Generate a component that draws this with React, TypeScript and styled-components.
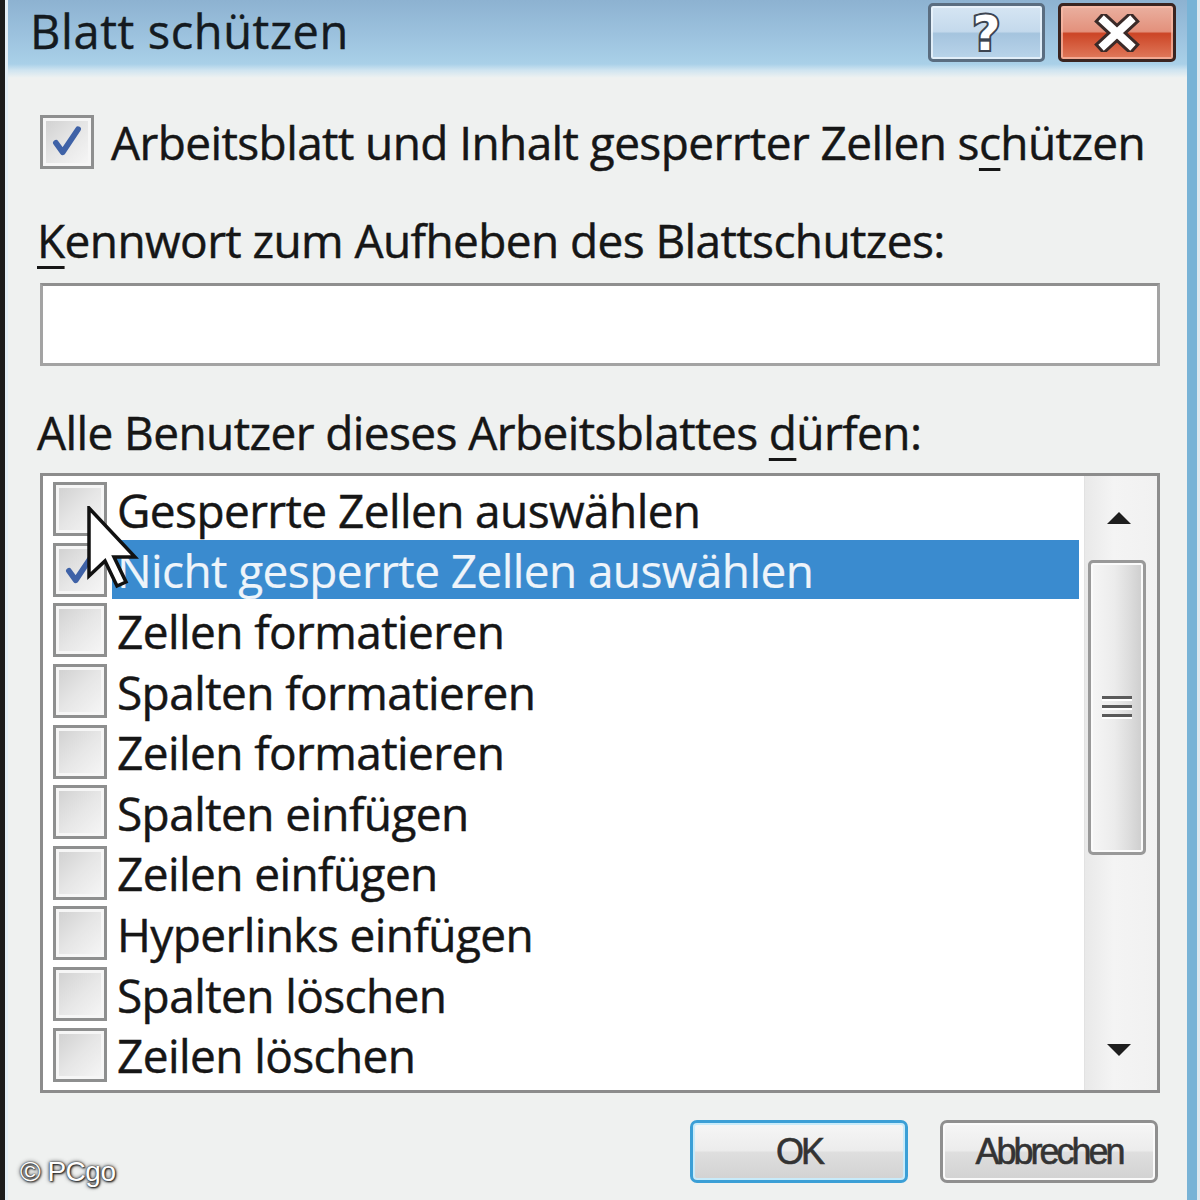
import React from "react";
import styled, { createGlobalStyle } from "styled-components";

const GlobalStyle = createGlobalStyle`
  html, body { margin: 0; padding: 0; background: #eff1f0; }
  body {
    width: 1200px; height: 1200px; overflow: hidden;
    font-family: "Open Sans", "Noto Sans", sans-serif;
    color: #161616;
  }
`;

const Window = styled.div`
  position: relative;
  width: 1200px;
  height: 1200px;
  box-sizing: border-box;
  border-left: 5px solid #1c1c1c;
  border-right: 3px solid #dfe9ef;
  background: #eff1f0;
  overflow: hidden;
`;

const Frame = styled.div`
  height: 100%;
  box-sizing: border-box;
  display: flex;
  flex-direction: column;
  border-left: 3px solid #e3eef6;
  border-right: 10px solid #78b3d6;
`;

const TitleBar = styled.div`
  height: 78px;
  flex: none;
  display: flex;
  align-items: flex-start;
  padding-left: 22px;
  padding-right: 11px;
  background: linear-gradient(
    to bottom,
    #8db2d1 0%,
    #9cc2de 45%,
    #a9d0e8 82%,
    #cfe4f0 90%,
    #eff2f1 100%
  );
`;

const Title = styled.span`
  flex: 1;
  font-size: 47px;
  line-height: 62px;
  letter-spacing: 0.6px;
  color: #141a20;
  -webkit-text-stroke: 0.4px #141a20;
`;

const CaptionButton = styled.div<{ $variant: "help" | "close" }>`
  margin-top: 3px;
  height: 59px;
  width: ${(p) => (p.$variant === "help" ? 117 : 118)}px;
  margin-left: ${(p) => (p.$variant === "help" ? 0 : 13)}px;
  box-sizing: border-box;
  border-radius: 5px;
  border: 3px solid ${(p) => (p.$variant === "help" ? "#5a6d80" : "#3a2420")};
  box-shadow: inset 0 0 0 2px
    ${(p) => (p.$variant === "help" ? "rgba(235,245,252,0.8)" : "rgba(250,190,170,0.7)")};
  background: ${(p) =>
    p.$variant === "help"
      ? "linear-gradient(to bottom, #d6e6f3 0%, #c4d9ec 48%, #a5c4de 52%, #b9d4ea 100%)"
      : "linear-gradient(to bottom, #eab0a0 0%, #e3917c 48%, #cc4526 52%, #e07a5c 100%)"};
  display: flex;
  align-items: center;
  justify-content: center;
`;

const HelpGlyph = styled.span`
  font-family: "DejaVu Sans", sans-serif;
  font-weight: 700;
  font-size: 48px;
  line-height: 50px;
  color: #ffffff;
  -webkit-text-stroke: 4px #3c4450;
  paint-order: stroke fill;
`;

const Content = styled.div`
  flex: 1;
  display: flex;
  flex-direction: column;
  padding: 0 27px 0 32px;
  letter-spacing: -0.6px;
  -webkit-text-stroke: 0.45px currentColor;
`;

const CheckRow = styled.label`
  margin-top: 34px;
  height: 60px;
  display: flex;
  align-items: center;
  font-size: 46px;
  line-height: 60px;
  white-space: nowrap;
`;

const RowText = styled.span`
  margin-left: 17px;
`;

const Box = styled.span`
  flex: none;
  width: 54px;
  height: 54px;
  box-sizing: border-box;
  border: 3px solid #8e8f8f;
  box-shadow: inset 0 0 0 3px #f6f6f6;
  background: linear-gradient(135deg, #cfcfcf 0%, #e6e6e6 50%, #f7f7f7 100%);
  display: flex;
  align-items: center;
  justify-content: center;
`;

const Accel = styled.span`
  text-decoration: underline;
  text-decoration-thickness: 3px;
  text-underline-offset: 8px;
`;

const FieldLabel = styled.div<{ $gap: number }>`
  margin-top: ${(p) => p.$gap}px;
  font-size: 46px;
  line-height: 60px;
  white-space: nowrap;
  margin-left: -3px;
`;

const TextInput = styled.div`
  margin-top: 13px;
  height: 83px;
  box-sizing: border-box;
  border: 3px solid #a3a3a3;
  border-top-color: #8f8f8f;
  background: #ffffff;
`;

const List = styled.div`
  margin-top: 11px;
  height: 620px;
  box-sizing: border-box;
  border: 3px solid #8c8c8c;
  background: #ffffff;
  display: flex;
`;

const Items = styled.div`
  flex: 1;
  display: flex;
  flex-direction: column;
  padding-top: 3px;
  padding-left: 10px;
`;

const Item = styled.div`
  height: 60.6px;
  flex: none;
  display: flex;
  align-items: center;
  font-size: 46px;
  white-space: nowrap;
`;

const ItemLabel = styled.span<{ $selected?: boolean }>`
  flex: 1;
  height: 59px;
  line-height: 60px;
  margin-left: 5px;
  margin-right: 5px;
  padding-left: 5px;
  background: ${(p) => (p.$selected ? "#3a8bcf" : "transparent")};
  color: ${(p) => (p.$selected ? "#eef4fa" : "#161616")};
  -webkit-text-stroke: ${(p) => (p.$selected ? "0.2px" : "0.45px")} currentColor;
`;

const ScrollBar = styled.div`
  width: 72px;
  flex: none;
  display: flex;
  flex-direction: column;
  background: linear-gradient(to right, #e9e9e9 0%, #f4f4f4 40%, #f1f1f1 100%);
  border-left: 1px solid #e2e2e2;
`;

const ArrowButton = styled.div<{ $h: number }>`
  height: ${(p) => p.$h}px;
  flex: none;
  display: flex;
  align-items: center;
  justify-content: center;
  padding-right: 4px;
`;

const Thumb = styled.div`
  height: 295px;
  flex: none;
  margin-left: 3px;
  width: 58px;
  box-sizing: border-box;
  border: 3px solid #999999;
  border-radius: 5px;
  background: linear-gradient(to right, #f6f6f6 0%, #ececec 45%, #dcdcdc 75%, #cdcdcd 100%);
  box-shadow: inset 0 0 0 2px #fbfbfb;
  display: flex;
  align-items: center;
  justify-content: center;
`;

const Track = styled.div`
  flex: 1;
`;

const Footer = styled.div`
  margin-top: 27px;
  display: flex;
  justify-content: flex-end;
  gap: 32px;
  padding-right: 2px;
`;

const DialogButton = styled.div<{ $default?: boolean }>`
  width: 218px;
  height: 63px;
  box-sizing: border-box;
  border-radius: 7px;
  border: 3px solid ${(p) => (p.$default ? "#3b9fd6" : "#8f8f8f")};
  box-shadow: inset 0 0 0 2px ${(p) => (p.$default ? "#c8ebfa" : "#fafafa")};
  background: linear-gradient(to bottom, #f6f6f6 0%, #ececec 48%, #dedede 52%, #d2d2d2 100%);
  display: flex;
  align-items: center;
  justify-content: center;
  font-family: "Liberation Sans", Arial, sans-serif;
  font-size: 36px;
  letter-spacing: -3px;
  color: #333333;
  -webkit-text-stroke: 0.6px #333333;
`;

const Watermark = styled.div`
  position: absolute;
  left: 15px;
  bottom: 12px;
  font-family: "Liberation Sans", Arial, sans-serif;
  font-size: 28px;
  letter-spacing: -0.5px;
  color: #ffffff;
  text-shadow: 0 0 2px #222, 0 0 4px #333, 1px 1px 2px #111;
`;

const Cursor = styled.svg`
  position: absolute;
  left: 82px;
  top: 506px;
  width: 52px;
  height: 84px;
  pointer-events: none;
`;

const CheckIcon = () => (
  <svg width="34" height="34" viewBox="0 0 20 20">
    <path
      d="M3.5 10.5 L7.5 16 L16.5 2.5"
      fill="none"
      stroke="#3f62a7"
      strokeWidth="3.4"
      strokeLinecap="round"
      strokeLinejoin="round"
    />
  </svg>
);

const CloseGlyph = () => (
  <svg width="48" height="38" viewBox="0 0 48 38">
    <path d="M11 7 L37 31 M37 7 L11 31" stroke="#3a2a28" strokeWidth="14" strokeLinecap="square" />
    <path d="M11 7 L37 31 M37 7 L11 31" stroke="#ffffff" strokeWidth="8" strokeLinecap="square" />
  </svg>
);

const UpArrow = () => (
  <svg width="26" height="14" viewBox="0 0 26 14">
    <path d="M13 1 L25 13 L1 13 Z" fill="#1e1e1e" />
  </svg>
);

const DownArrow = () => (
  <svg width="26" height="14" viewBox="0 0 26 14">
    <path d="M1 1 L25 1 L13 13 Z" fill="#1e1e1e" />
  </svg>
);

const Grip = () => (
  <svg width="32" height="28" viewBox="0 0 32 28">
    {[2, 11, 20].map((y) => (
      <g key={y}>
        <rect x="1" y={y} width="30" height="3" fill="#5a5a5a" />
        <rect x="1" y={y + 3} width="30" height="2" fill="#ffffff" />
      </g>
    ))}
  </svg>
);

const items: { label: string; checked?: boolean; selected?: boolean }[] = [
  { label: "Gesperrte Zellen auswählen" },
  { label: "Nicht gesperrte Zellen auswählen", checked: true, selected: true },
  { label: "Zellen formatieren" },
  { label: "Spalten formatieren" },
  { label: "Zeilen formatieren" },
  { label: "Spalten einfügen" },
  { label: "Zeilen einfügen" },
  { label: "Hyperlinks einfügen" },
  { label: "Spalten löschen" },
  { label: "Zeilen löschen" },
];

export default function App() {
  return (
    <>
      <GlobalStyle />
      <Window>
        <Frame>
          <TitleBar>
            <Title>Blatt schützen</Title>
            <CaptionButton $variant="help">
              <HelpGlyph>?</HelpGlyph>
            </CaptionButton>
            <CaptionButton $variant="close">
              <CloseGlyph />
            </CaptionButton>
          </TitleBar>
          <Content>
            <CheckRow>
              <Box>
                <CheckIcon />
              </Box>
              <RowText>
                Arbeitsblatt und Inhalt gesperrter Zellen s<Accel>c</Accel>hützen
              </RowText>
            </CheckRow>
            <FieldLabel $gap={38}>
              <Accel>K</Accel>ennwort zum Aufheben des Blattschutzes:
            </FieldLabel>
            <TextInput />
            <FieldLabel $gap={36}>
              Alle Benutzer dieses Arbeitsblattes <Accel>d</Accel>ürfen:
            </FieldLabel>
            <List>
              <Items>
                {items.map((it) => (
                  <Item key={it.label}>
                    <Box>{it.checked && <CheckIcon />}</Box>
                    <ItemLabel $selected={it.selected}>{it.label}</ItemLabel>
                  </Item>
                ))}
              </Items>
              <ScrollBar>
                <ArrowButton $h={84}>
                  <UpArrow />
                </ArrowButton>
                <Thumb>
                  <Grip />
                </Thumb>
                <Track />
                <ArrowButton $h={80}>
                  <DownArrow />
                </ArrowButton>
              </ScrollBar>
            </List>
            <Footer>
              <DialogButton $default>OK</DialogButton>
              <DialogButton>Abbrechen</DialogButton>
            </Footer>
          </Content>
        </Frame>
        <Watermark>© PCgo</Watermark>
        <Cursor viewBox="0 0 52 84">
          <path
            d="M2 2 L2 70 L18 55 L30 80 L39 76 L27 51 L48 51 Z"
            fill="#ffffff"
            stroke="#111111"
            strokeWidth="3.5"
            strokeLinejoin="miter"
          />
        </Cursor>
      </Window>
    </>
  );
}
